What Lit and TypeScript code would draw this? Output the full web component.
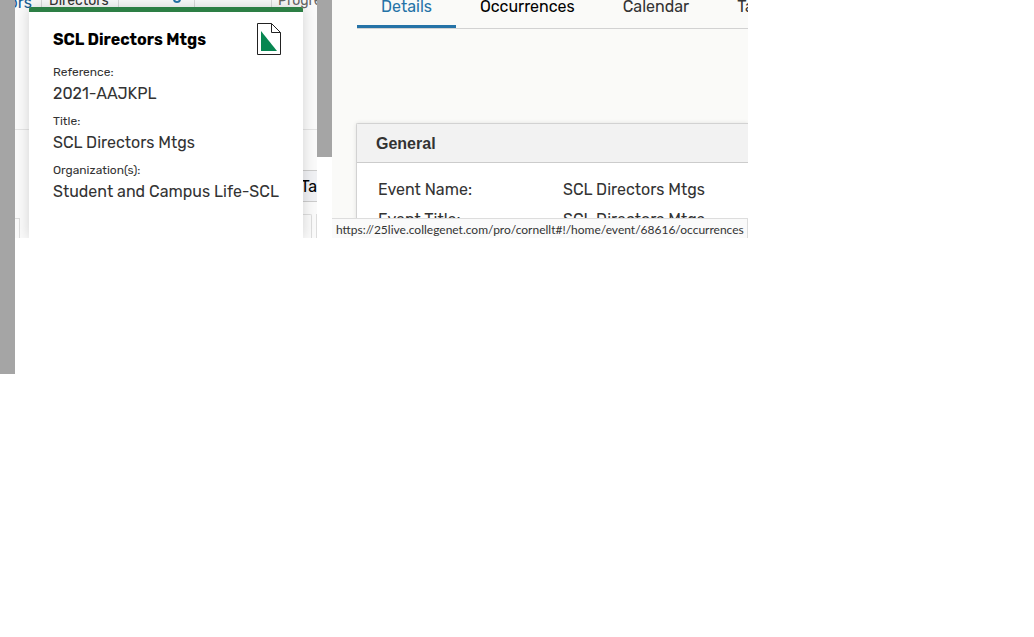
import { LitElement, html, css } from "lit";
import { customElement, state } from "lit/decorators.js";

@customElement("event-card")
class EventCard extends LitElement {
  static styles = css`
    :host {
      display: block;
      box-sizing: border-box;
      padding: 11px 16px 34px 24px;
      background: #fff;
      border-top: 5px solid #2d7f45;
      border-radius: 2px 2px 0 0;
      box-shadow: 0 0 14px rgba(0, 0, 0, 0.16);
      color: #333;
      font-size: 16px;
    }
    .head {
      display: flex;
      justify-content: space-between;
      align-items: flex-start;
      height: 34px;
      padding-right: 6px;
    }
    h2 {
      margin: 0;
      padding-top: 5px;
      font-size: 16px;
      line-height: 24px;
      font-weight: 700;
      color: #000;
      white-space: nowrap;
    }
    dl {
      margin: 0;
    }
    dt {
      padding-top: 5px;
      font-size: 12px;
      line-height: 20px;
    }
    dd {
      margin: 0;
      line-height: 24px;
      white-space: nowrap;
    }
  `;

  fields = [
    ["Reference:", "2021-AAJKPL"],
    ["Title:", "SCL Directors Mtgs"],
    ["Organization(s):", "Student and Campus Life-SCL"],
  ];

  render() {
    return html`
      <div class="head">
        <h2>SCL Directors Mtgs</h2>
        <svg width="24" height="32" viewBox="0 0 24 32" aria-hidden="true">
          <path d="M.5.5H14.5L23.5 9.5V31.5H.5Z" fill="#fff" stroke="#222" />
          <path d="M14.5.5V9.5H23.5" fill="none" stroke="#222" />
          <path d="M4 8V28H20Z" fill="#078651" />
        </svg>
      </div>
      <dl>
        ${this.fields.map(([k, v]) => html`<dt>${k}</dt><dd>${v}</dd>`)}
      </dl>
    `;
  }
}

@customElement("event-list")
class EventList extends LitElement {
  static styles = css`
    :host {
      display: grid;
      overflow: hidden;
      background: #fafafa;
    }
    .backdrop,
    event-card {
      grid-area: 1 / 1;
      min-width: 0;
    }
    event-card {
      margin: 7px 14px 0;
      z-index: 1;
    }
    .backdrop {
      display: grid;
      grid-template-rows: 10px 119px 41px 32px 1fr;
      overflow: hidden;
      font-size: 14px;
      color: #333;
    }
    .cells {
      display: grid;
      grid-template-columns: 27px 77px 76px 77px 1fr;
      line-height: 20px;
      margin-top: -9px;
      height: 20px;
      white-space: nowrap;
    }
    .cell {
      box-sizing: border-box;
      padding-left: 7px;
      border-right: 1px solid #d9d9d9;
      overflow: hidden;
    }
    .cell.end {
      display: flex;
      justify-content: flex-end;
      padding: 0 9px 0 0;
      font-size: 16px;
      line-height: 24px;
    }
    .cell.mark {
      padding-left: 54px;
    }
    .cell:last-child {
      border: 0;
      padding-left: 6px;
      color: #666;
    }
    a {
      color: #1a5f94;
      text-decoration: none;
    }
    .ring {
      display: block;
      width: 4px;
      height: 6px;
      margin-top: 2px;
      border: 2px solid #2573a7;
      border-radius: 4px;
    }
    .line {
      border-top: 1px solid #e4e4e4;
    }
    .task {
      display: flex;
      justify-content: flex-end;
      align-items: center;
      justify-self: end;
      width: 20px;
      background: #f0f1f4;
      border: solid #ccc;
      border-width: 1px 0;
      box-sizing: border-box;
      font-size: 16px;
      color: #000;
    }
    .boxes {
      display: flex;
      justify-content: space-between;
      align-items: flex-end;
    }
    .box {
      box-sizing: border-box;
      width: 5px;
      height: 20px;
      border: solid #ddd;
      border-width: 1px 1px 0 0;
    }
    .pair {
      display: flex;
      gap: 4px;
      align-items: flex-end;
    }
    .pair .box {
      width: 12px;
      height: 24px;
      border-top-right-radius: 2px;
    }
    .edge {
      width: 1px;
      height: 24px;
      background: #ddd;
    }
  `;

  render() {
    return html`
      <div class="backdrop">
        <div class="cells">
          <div class="cell end"><a href="#">ors</a></div>
          <div class="cell">Directors</div>
          <div class="cell mark"><span class="ring"></span></div>
          <div class="cell"></div>
          <div class="cell">Progress</div>
        </div>
        <div></div>
        <div class="line"></div>
        <div class="task">Ta</div>
        <div class="boxes">
          <span class="box"></span>
          <span class="pair"><span class="box"></span><span class="edge"></span></span>
        </div>
      </div>
      <event-card></event-card>
    `;
  }
}

@customElement("event-details")
class EventDetails extends LitElement {
  static styles = css`
    :host {
      display: block;
      position: relative;
      overflow: hidden;
      background: #fafaf8;
      color: #333;
      font-size: 16px;
    }
    nav {
      display: flex;
      margin: -5px 0 0 25px;
      border-bottom: 1px solid #d2d2d2;
    }
    button {
      flex: none;
      padding: 0 24px 6px;
      border: 0;
      border-bottom: 3px solid transparent;
      background: none;
      font: inherit;
      line-height: 24px;
      color: #333;
    }
    button.visited {
      color: #000;
    }
    button.active {
      color: #2573a7;
      border-bottom-color: #2573a7;
    }
    section {
      margin: 94px 0 0 24px;
      border: solid #d2d2d2;
      border-width: 1px 0 0 1px;
      border-top-left-radius: 2px;
      background: #fff;
      box-shadow: 0 0 4px rgba(0, 0, 0, 0.1);
    }
    h3 {
      margin: 0;
      padding: 2px 19px 0;
      font: 700 16px/36px "Liberation Sans", Arial, sans-serif;
      background: #f2f2f2;
      border-bottom: 1px solid #ccc;
    }
    dl {
      display: grid;
      grid-template-columns: 185px 1fr;
      margin: 0;
      padding: 12px 0 3px 21px;
      line-height: 30px;
      white-space: nowrap;
    }
    dd {
      margin: 0;
    }
    .status {
      position: absolute;
      inset: auto 0 0 0;
      box-sizing: border-box;
      height: 20px;
      padding: 0 4px;
      border: solid #ddd;
      border-width: 1px 1px 0 0;
      background: #fafafa;
      font: 12px/22px Lato, "Noto Sans", sans-serif;
      white-space: nowrap;
    }
  `;

  @state() active = "Details";

  tabs = ["Details", "Occurrences", "Calendar", "Task List"];

  tabClass(name: string) {
    if (name === this.active) return "active";
    return name === "Occurrences" ? "visited" : "";
  }

  render() {
    return html`
      <nav>
        ${this.tabs.map(
          (t) => html`<button class=${this.tabClass(t)} @click=${() => (this.active = t)}>${t}</button>`
        )}
      </nav>
      <section>
        <h3>General</h3>
        <dl>
          <dt>Event Name:</dt>
          <dd>SCL Directors Mtgs</dd>
          <dt>Event Title:</dt>
          <dd>SCL Directors Mtgs</dd>
        </dl>
      </section>
      <div class="status">https://25live.collegenet.com/pro/cornellt#!/home/event/68616/occurrences</div>
    `;
  }
}

@customElement("app-root")
class AppRoot extends LitElement {
  static styles = css`
    :host {
      display: grid;
      grid-template-columns: 15px 302fr 15px 416fr 286fr;
      align-items: start;
      min-height: 100vh;
      background: #fff;
      font-family: Rubik, Roboto, sans-serif;
    }
    .rail {
      height: 374px;
      background: #a5a5a5;
    }
    .rail.short {
      height: 157px;
    }
  `;

  render() {
    return html`
      <div class="rail"></div>
      <event-list></event-list>
      <div class="rail short"></div>
      <event-details></event-details>
    `;
  }
}
